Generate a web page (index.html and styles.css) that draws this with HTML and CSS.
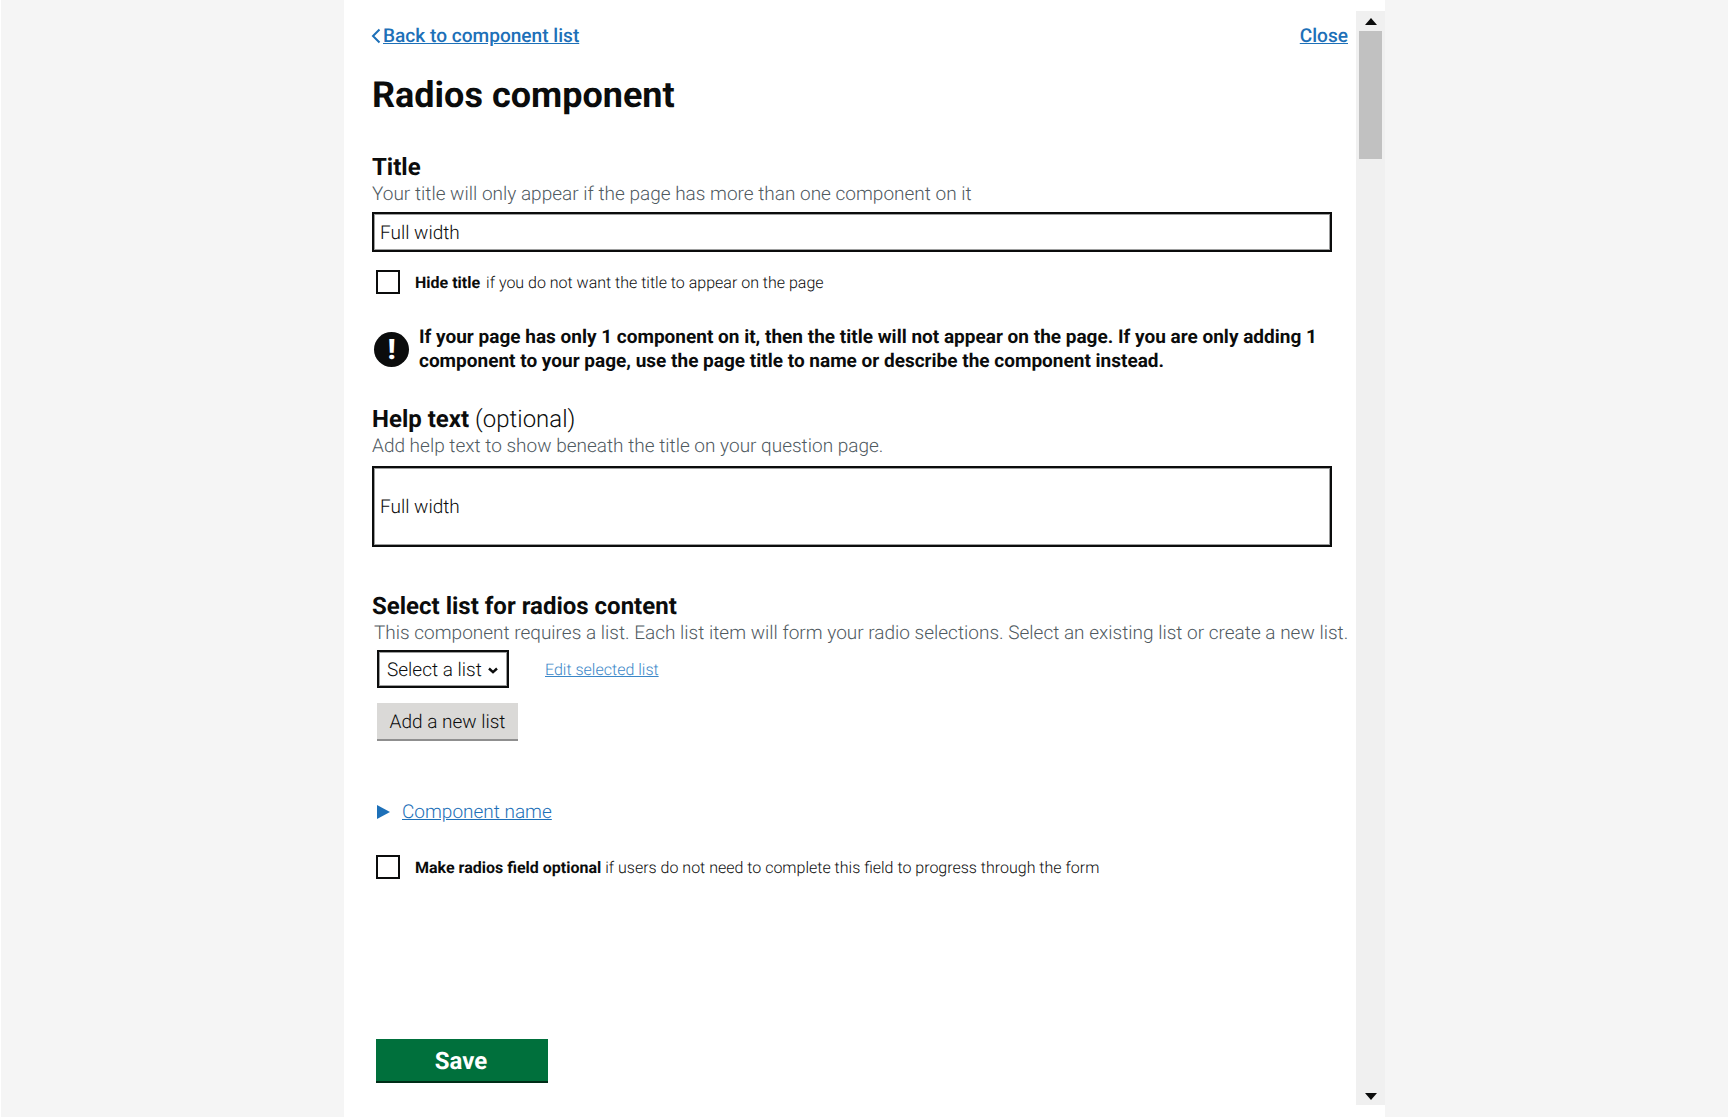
FILE: index.html
```html
<!DOCTYPE html>
<html lang="en">
<head>
<meta charset="utf-8">
<title>Radios component</title>
<link rel="stylesheet" href="styles.css">
</head>
<body>
<div class="page">
  <div class="panel">
    <main class="content">
      <nav class="topbar">
        <a class="back" href="#"><svg class="chev" width="10" height="16" viewBox="0 0 10 16"><path d="M8.500 1.500 2 8l6.500 6.500" fill="none" stroke="#1d70b8" stroke-width="2"/></svg><span class="link-text">Back to component list</span></a>
        <a class="close" href="#">Close</a>
      </nav>
      <h1 class="heading">Radios component</h1>

      <section class="field field-title">
        <div class="label">Title</div>
        <div class="hint">Your title will only appear if the page has more than one component on it</div>
        <div class="input">Full width</div>
      </section>

      <div class="check check-hide">
        <span class="box"></span>
        <span class="check-text"><b>Hide title</b><span class="gap"></span>if you do not want the title to appear on the page</span>
      </div>

      <div class="warning">
        <span class="warn-icon">!</span>
        <strong class="warn-text">If your page has only 1 component on it, then the title will not appear on the page. If you are only adding 1 component to your page, use the page title to name or describe the component instead.</strong>
      </div>

      <section class="field field-help">
        <div class="label">Help text <span class="optional">(optional)</span></div>
        <div class="hint">Add help text to show beneath the title on your question page.</div>
        <div class="input textarea">Full width</div>
      </section>

      <section class="field field-list">
        <div class="label">Select list for radios content</div>
        <div class="hint hint-list">This component requires a list. Each list item will form your radio selections. Select an existing list or create a new list.</div>
        <div class="select-row">
          <div class="select">Select a list<svg class="caret" width="10" height="7" viewBox="0 0 10 7"><path d="M1 1.500 5 5.200 9 1.500" fill="none" stroke="#0b0c0c" stroke-width="2.400"/></svg></div>
          <a class="edit" href="#">Edit selected list</a>
        </div>
        <div class="add">Add a new list</div>
      </section>

      <div class="details">
        <span class="tri"></span>
        <a class="details-link" href="#">Component name</a>
      </div>

      <div class="check check-optional">
        <span class="box"></span>
        <span class="check-text"><b>Make radios field optional</b> if users do not need to complete this field to progress through the form</span>
      </div>

      <div class="save">Save</div>
    </main>
    <aside class="scrollbar">
      <span class="arrow-up"></span>
      <span class="thumb"></span>
      <span class="arrow-down"></span>
    </aside>
  </div>
</div>
</body>
</html>
```
FILE: styles.css
```css
* { box-sizing: border-box; }
html, body { margin: 0; height: 100%; }
body {
  background: #f5f5f5;
  border-left: 1px solid #fff;
  font-family: Roboto, "Liberation Sans", sans-serif;
  color: #0b0c0c;
  overflow: hidden;
  text-rendering: geometricPrecision;
}
.page { padding-left: 343px; height: 1117px; }
.panel {
  width: 1041px;
  height: 1117px;
  background: #fff;
  display: flex;
}
.content { width: 1012px; padding: 0 0 0 28px; }
a { color: #1d70b8; }

.topbar {
  display: flex;
  justify-content: space-between;
  align-items: center;
  height: 24px;
  margin-top: 23px;
  width: 976px;
  font-size: 19.100px;
  font-weight: 500;
}
.back { display: flex; align-items: center; text-decoration: none; margin-left: -1px; }
.chev { margin-right: 2px; margin-top: 2px; }
.link-text { text-decoration: underline; }
.close { text-decoration: underline; }

.heading { font-size: 36px; font-weight: 700; line-height: 44px; margin: 26px 0 0; }

.field-title { margin-top: 36px; }
.label { font-size: 24px; font-weight: 700; line-height: 29px; }
.optional { font-weight: 300; }
.hint { font-size: 19px; font-weight: 300; line-height: 24px; color: #505a5f; }
.input {
  width: 960px;
  height: 40px;
  margin-top: 6px;
  border: 2px solid #0b0c0c;
  box-shadow: inset 0 0 0 1px rgba(11, 12, 12, 0.4);
  padding: 0 6px;
  display: flex;
  align-items: center;
  font-size: 19px;
  font-weight: 300;
}
.textarea { height: 81px; margin-top: 8px; }

.check { display: flex; align-items: center; padding-left: 4px; }
.box { width: 24px; height: 24px; border: 2px solid #0b0c0c; flex: none; margin-right: 15px; }
.check-text { font-size: 16px; font-weight: 300; }
.check-text b { font-weight: 700; }
.gap { display: inline-block; width: 6px; }
.check-hide { margin-top: 18px; }

.warning { display: flex; align-items: center; margin-top: 31px; width: 960px; padding-left: 2px; }
.warn-icon {
  width: 35px;
  height: 35px;
  border-radius: 50%;
  background: #0b0c0c;
  color: #fff;
  font-size: 28px;
  font-weight: 900;
  display: flex;
  align-items: center;
  justify-content: center;
  flex: none;
  margin-right: 10px;
}
.warn-text { font-size: 19px; font-weight: 700; line-height: 24px; }

.field-help { margin-top: 32px; }
.field-list { margin-top: 45px; }
.hint-list { padding-left: 2px; white-space: nowrap; }

.select-row { display: flex; align-items: center; margin-top: 5px; padding-left: 5px; }
.select {
  width: 132px;
  height: 38px;
  border: 2px solid #0b0c0c;
  box-shadow: inset 0 0 0 1px rgba(11, 12, 12, 0.4);
  display: flex;
  align-items: center;
  padding-left: 8px;
  font-size: 19px;
  font-weight: 300;
}
.caret { margin-left: 6px; margin-top: 2px; }
.edit { margin-left: 36px; font-size: 16px; font-weight: 300; color: #3b87c8; }
.add {
  margin: 15px 0 0 5px;
  width: 141px;
  height: 38px;
  background: #dad9d7;
  border-bottom: 2px solid #8f8f8f;
  display: flex;
  align-items: center;
  justify-content: center;
  font-size: 19px;
  font-weight: 300;
}

.details { display: flex; align-items: center; margin: 57px 0 0 5px; height: 26px; }
.tri {
  width: 0; height: 0;
  border-left: 13px solid #1d70b8;
  border-top: 7px solid transparent;
  border-bottom: 7px solid transparent;
  margin: 2px 12px 0 0;
}
.details-link { font-size: 19px; font-weight: 300; }
.check-optional { margin-top: 31px; }

.save {
  margin: 160px 0 0 4px;
  width: 172px;
  height: 44px;
  padding: 1px 2px 0 0;
  background: #00703c;
  border-bottom: 2px solid #002d18;
  color: #fff;
  font-size: 24px;
  font-weight: 700;
  display: flex;
  align-items: center;
  justify-content: center;
}

.scrollbar {
  width: 29px;
  margin: 11px 0 12px;
  background: #f0f0f0;
  display: flex;
  flex-direction: column;
  align-items: center;
}
.arrow-up {
  margin-top: 7px;
  border-left: 6.500px solid transparent;
  border-right: 6.500px solid transparent;
  border-bottom: 7px solid #0b0c0c;
}
.thumb { width: 23px; height: 128px; background: #c1c1c1; margin-top: 6px; }
.arrow-down {
  margin-top: auto;
  margin-bottom: 5px;
  border-left: 6.500px solid transparent;
  border-right: 6.500px solid transparent;
  border-top: 7px solid #0b0c0c;
}
```
